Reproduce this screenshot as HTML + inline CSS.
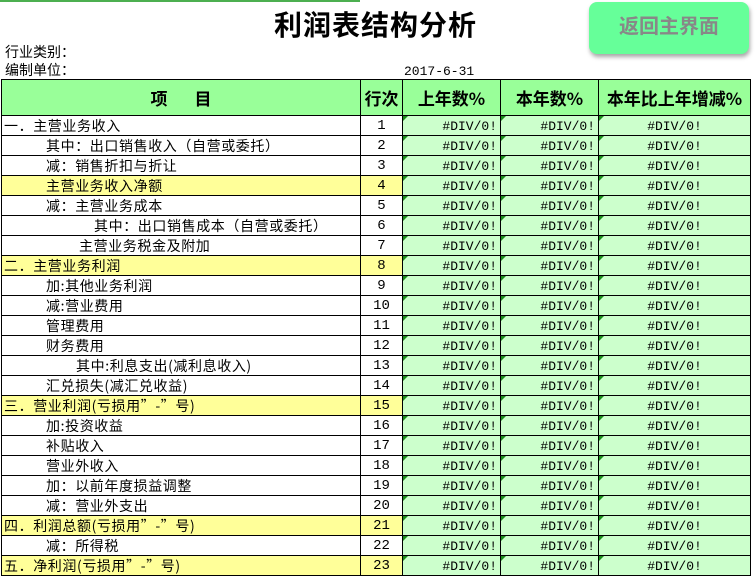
<!DOCTYPE html>
<html><head><meta charset="utf-8"><style>
body{margin:0;width:755px;height:581px;background:#fff;position:relative;overflow:hidden;font-family:"Liberation Sans","Noto Sans CJK SC",sans-serif;}
.abs{position:absolute;}
table{position:absolute;left:1px;top:79px;border-collapse:collapse;table-layout:fixed;}
td{border:1px solid #000;padding:0;position:relative;}
td>div{height:19px;overflow:hidden;white-space:nowrap;font-size:14px;line-height:21px;}
th{border:1px solid #000;height:35px;background:#99ff99;font-size:17px;font-weight:bold;padding:0;font-family:"Noto Sans CJK SC",sans-serif;white-space:nowrap;}
th>div{height:35px;line-height:35px;overflow:hidden;}
.it div{text-align:left;font-family:"Noto Sans CJK SC",sans-serif;letter-spacing:0.6px;font-size:14px;line-height:20px;}
.n div{text-align:center;font-family:"Liberation Mono",monospace;}
.d{background:#ccffcc;}
.d div{font-family:"Liberation Mono",monospace;font-size:13px;text-align:right;padding-right:3px;}
.d3 div{text-align:center;padding-right:0;}
.y{background:#ffff99;}
.d::before{content:"";position:absolute;left:0;top:0;border-top:5px solid #1a8a1a;border-right:5px solid transparent;}
</style></head><body>
<div class="abs" style="left:0;top:0;width:360px;height:2px;background:#4caf50"></div>
<div class="abs" style="left:274px;top:4px;font-size:28px;font-weight:bold;letter-spacing:1px">利润表结构分析</div>
<div class="abs" style="left:589px;top:2px;width:160px;height:52px;background:#66ff99;border-radius:8px;box-shadow:1px 3px 4px rgba(0,0,0,.35);color:#888;font-size:20px;font-weight:bold;text-align:center;line-height:50px">返回主界面</div>
<div class="abs" style="left:5px;top:43px;font-size:14px;font-family:'Noto Sans CJK SC',sans-serif;line-height:18px">行业类别：</div>
<div class="abs" style="left:5px;top:61px;font-size:14px;font-family:'Noto Sans CJK SC',sans-serif;line-height:18px">编制单位：</div>
<div class="abs" style="left:404px;top:64px;font-size:13px;font-family:'Liberation Mono',monospace">2017-6-31</div>
<table>
<colgroup><col style="width:359px"><col style="width:42px"><col style="width:98px"><col style="width:98px"><col style="width:152px"></colgroup>
<tr><th><div>项&nbsp;&nbsp;&nbsp;&nbsp;&nbsp;&nbsp;&nbsp;目</div></th><th><div>行次</div></th><th><div>上年数%</div></th><th><div>本年数%</div></th><th><div>本年比上年增减%</div></th></tr>
</table>
<script>
var rows=[["一．主营业务收入",2,0],["其中：出口销售收入（自营或委托）",44,0],["减：销售折扣与折让",44,0],["主营业务收入净额",44,1],["减：主营业务成本",44,0],["其中：出口销售成本（自营或委托）",92,0],["主营业务税金及附加",77,0],["二．主营业务利润",2,1],["加:其他业务利润",44,0],["减:营业费用",44,0],["管理费用",44,0],["财务费用",44,0],["其中:利息支出(减利息收入)",74,0],["汇兑损失(减汇兑收益)",44,0],["三．营业利润(亏损用”-”号)",2,1],["加:投资收益",44,0],["补贴收入",44,0],["营业外收入",44,0],["加：以前年度损益调整",44,0],["减：营业外支出",44,0],["四．利润总额(亏损用”-”号)",2,1],["减：所得税",44,0],["五．净利润(亏损用”-”号)",2,1]];
var t=document.querySelector('table'),h='';
rows.forEach(function(r,i){var y=r[2]?' y':'';h+='<tr><td class="it'+y+'"><div style="padding-left:'+r[1]+'px">'+r[0]+'</div></td><td class="n'+y+'"><div>'+(i+1)+'</div></td><td class="d"><div>#DIV/0!</div></td><td class="d"><div>#DIV/0!</div></td><td class="d d3"><div>#DIV/0!</div></td></tr>';});
t.insertAdjacentHTML('beforeend',h);
</script>
</body></html>
